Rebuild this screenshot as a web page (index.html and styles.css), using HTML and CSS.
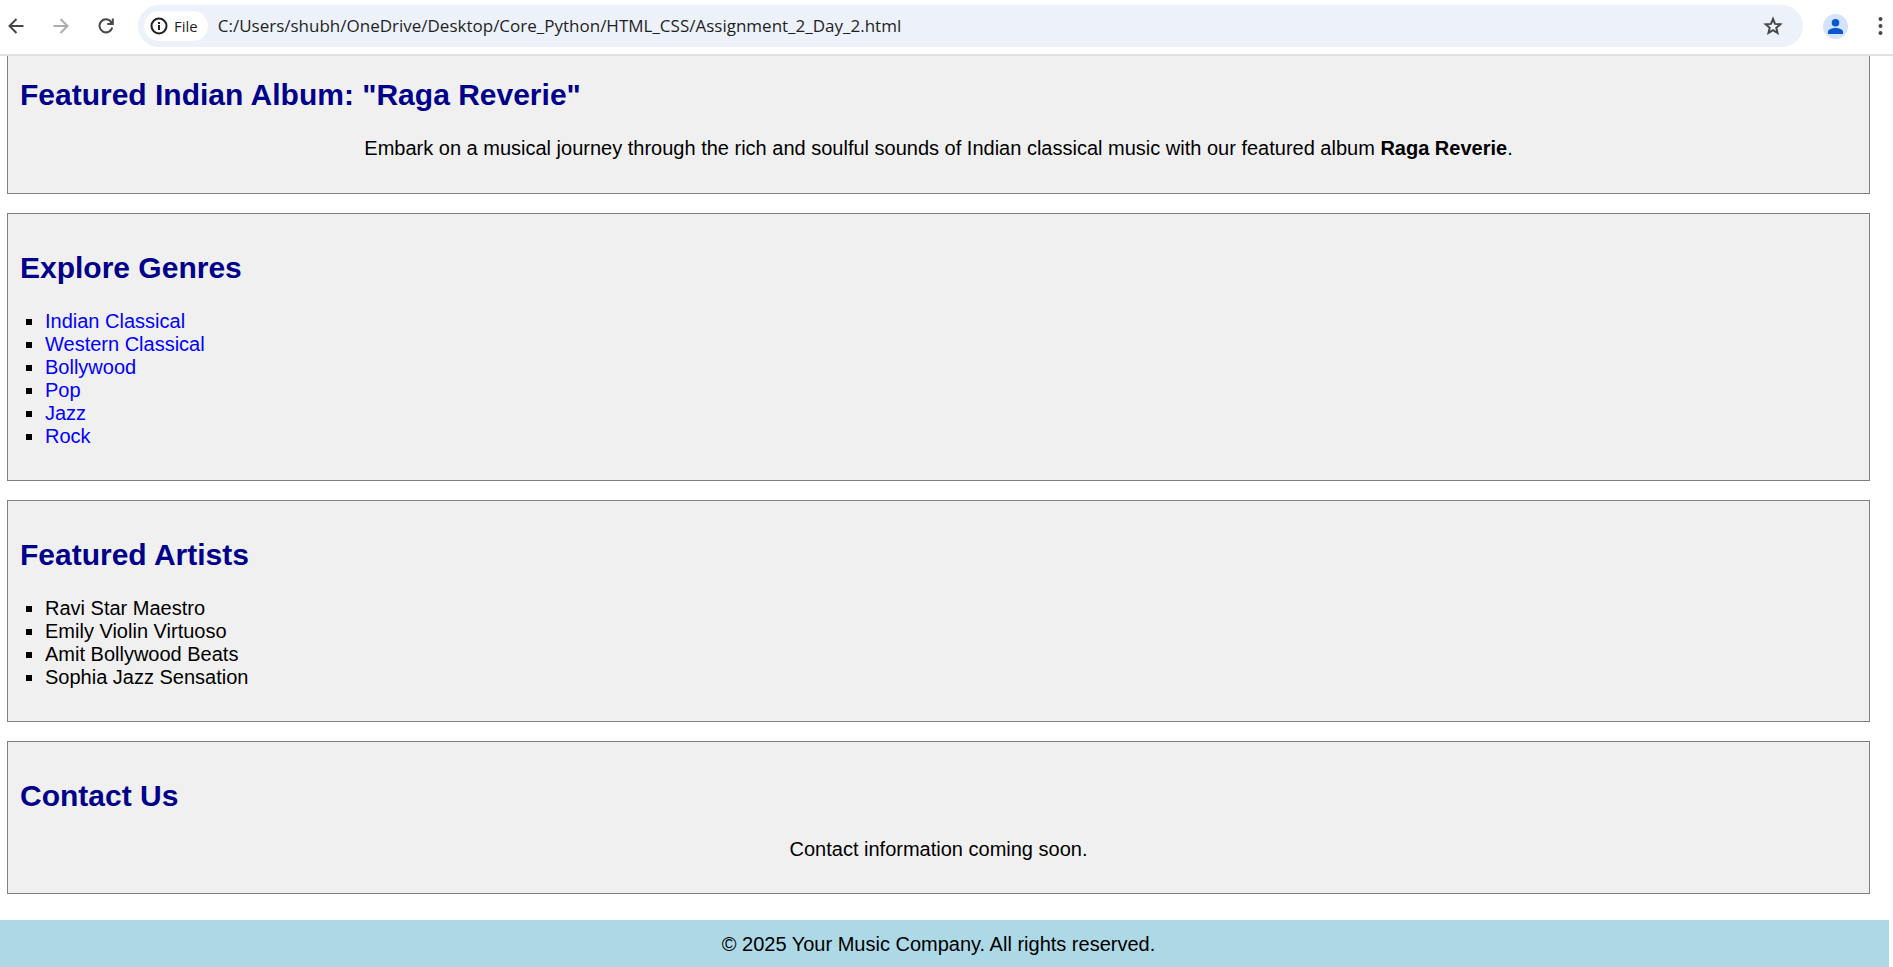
FILE: index.html
```html
<!DOCTYPE html>
<html lang="en">
<head>
<meta charset="utf-8">
<title>Your Music Company</title>
<link rel="stylesheet" href="styles.css">
</head>
<body class="window">
<header class="toolbar">
  <nav class="nav-buttons" aria-label="Browser navigation">
    <button class="icon-button" type="button" aria-label="Back">
      <svg width="16" height="16" viewBox="0 0 16 16" fill="none" stroke="#474747" stroke-width="2"><path d="M15.500 8H2M8.500 1L1.500 8l7 7"/></svg>
    </button>
    <button class="icon-button" type="button" aria-label="Forward" disabled>
      <svg width="16" height="16" viewBox="0 0 16 16" fill="none" stroke="#ababab" stroke-width="2"><path d="M.5 8H14M7.500 1l7 7-7 7"/></svg>
    </button>
    <button class="icon-button" type="button" aria-label="Reload">
      <svg width="16" height="16" viewBox="0 0 16 16" fill="none" stroke="#474747" stroke-width="2"><path d="M14.300 9.500A6.500 6.500 0 1 1 13.400 4.200"/><path d="M14.800 0.500V6H9.300"/><path d="M11.500 5L14 2.500V5z" fill="#474747" stroke="none"/></svg>
    </button>
  </nav>
  <div class="address-bar">
    <button class="chip" type="button">
      <svg width="18" height="18" viewBox="0 0 18 18" fill="none" stroke="#202124" stroke-width="2"><circle cx="9" cy="9" r="7.500"/><path d="M9 8v5M9 5v2"/></svg>
      <span>File</span>
    </button>
    <input class="address" type="text" aria-label="Address" value="C:/Users/shubh/OneDrive/Desktop/Core_Python/HTML_CSS/Assignment_2_Day_2.html">
    <button class="icon-button" type="button" aria-label="Bookmark this page">
      <svg width="20" height="20" viewBox="0 0 20 20" fill="none" stroke="#474747" stroke-width="2"><path d="M10 3l2 4.900 5.300.400-4 3.500 1.200 5.200L10 14.200 5.500 17l1.200-5.200-4-3.500L8 7.900z"/></svg>
    </button>
  </div>
  <button class="icon-button avatar" type="button" aria-label="Profile">
    <svg width="25" height="25" viewBox="0 0 25 25"><circle cx="12.500" cy="12.500" r="12.500" fill="#d3e3fd"/><circle cx="12.500" cy="8.700" r="3.800" fill="#0b57d0"/><path d="M5 20v-2.200c0-2.600 4.500-3.800 7.500-3.800s7.500 1.200 7.500 3.800V20z" fill="#0b57d0"/></svg>
  </button>
  <button class="icon-button menu" type="button" aria-label="Menu">
    <svg width="5" height="18" viewBox="0 0 5 18" fill="#474747"><circle cx="2.500" cy="2" r="2"/><circle cx="2.500" cy="9" r="2"/><circle cx="2.500" cy="16" r="2"/></svg>
  </button>
</header>
<div class="viewport">
  <div class="page">
    <main class="sections">
      <section class="card card-scrolled">
        <h2>Featured Indian Album: "Raga Reverie"</h2>
        <p>Embark on a musical journey through the rich and soulful sounds of Indian classical music with our featured album <strong>Raga Reverie</strong>.</p>
      </section>
      <section class="card">
        <h2>Explore Genres</h2>
        <ul>
          <li><a href="#">Indian Classical</a></li>
          <li><a href="#">Western Classical</a></li>
          <li><a href="#">Bollywood</a></li>
          <li><a href="#">Pop</a></li>
          <li><a href="#">Jazz</a></li>
          <li><a href="#">Rock</a></li>
        </ul>
      </section>
      <section class="card">
        <h2>Featured Artists</h2>
        <ul>
          <li>Ravi Star Maestro</li>
          <li>Emily Violin Virtuoso</li>
          <li>Amit Bollywood Beats</li>
          <li>Sophia Jazz Sensation</li>
        </ul>
      </section>
      <section class="card">
        <h2>Contact Us</h2>
        <p>Contact information coming soon.</p>
      </section>
    </main>
    <footer class="footer">© 2025 Your Music Company. All rights reserved.</footer>
  </div>
  <div class="scroll-track"></div>
</div>
</body>
</html>
```
FILE: styles.css
```css
* {
  box-sizing: border-box;
}

.window {
  margin: 0;
  min-height: 100vh;
  display: flex;
  flex-direction: column;
  background: #fff;
  color: #000;
  font: 20px/23px "Liberation Sans", Arial, sans-serif;
}

/* Browser toolbar */
.toolbar {
  display: flex;
  align-items: center;
  padding: 5px 10px 7px 8px;
  border-bottom: 2px solid #e0e0e0;
}

.nav-buttons {
  display: flex;
  gap: 29px;
  margin-right: 24px;
}

.icon-button {
  display: flex;
  flex: none;
  padding: 0;
  border: 0;
  background: none;
}

.address-bar {
  flex: 1;
  display: flex;
  align-items: center;
  height: 42px;
  padding: 0 20px 0 6px;
  border-radius: 21px;
  background: #ecf1fa;
}

.chip {
  display: flex;
  align-items: center;
  gap: 6px;
  height: 30px;
  padding: 0 10px 0 6px;
  border: 0;
  border-radius: 15px;
  background: #fff;
  color: #1f1f1f;
  font: 500 15px/20px "Open Sans", "Noto Sans", sans-serif;
}

.address {
  flex: 1;
  min-width: 0;
  padding: 0 10px;
  border: 0;
  outline: 0;
  background: none;
  color: #1f1f1f;
  font: 17px/24px "Open Sans", "Noto Sans", sans-serif;
}

.avatar {
  margin-left: 20px;
}

.menu {
  margin-left: 30px;
}

/* Page */
.viewport {
  flex: 1;
  display: flex;
}

.page {
  flex: 1;
  display: flex;
  flex-direction: column;
}

.scroll-track {
  width: 4px;
  background: #fcfcfc;
}

.sections {
  display: flex;
  flex-direction: column;
  gap: 19px;
  padding: 0 19px 26px 7px;
}

.card {
  padding: 12px;
  border: 1px solid #808080;
  background: #f0f0f0;
}

.card h2 {
  margin: 25px 0;
  color: #00008b;
  font-size: 30px;
  line-height: 34px;
}

.card p {
  margin: 0 0 20px;
  text-align: center;
}

.card ul {
  margin: 0 0 20px;
  padding-left: 25px;
  list-style: square;
}

.card a {
  color: #00f;
  text-decoration: none;
}

/* The page is scrolled, so the top edge of this card is out of view */
.card-scrolled {
  padding: 22px 12px 13px;
  border-top: 0;
}

.card-scrolled h2 {
  margin-top: 0;
}

.footer {
  flex: 1;
  padding: 13px 12px 11px 0;
  background: #add8e6;
  text-align: center;
}
```
